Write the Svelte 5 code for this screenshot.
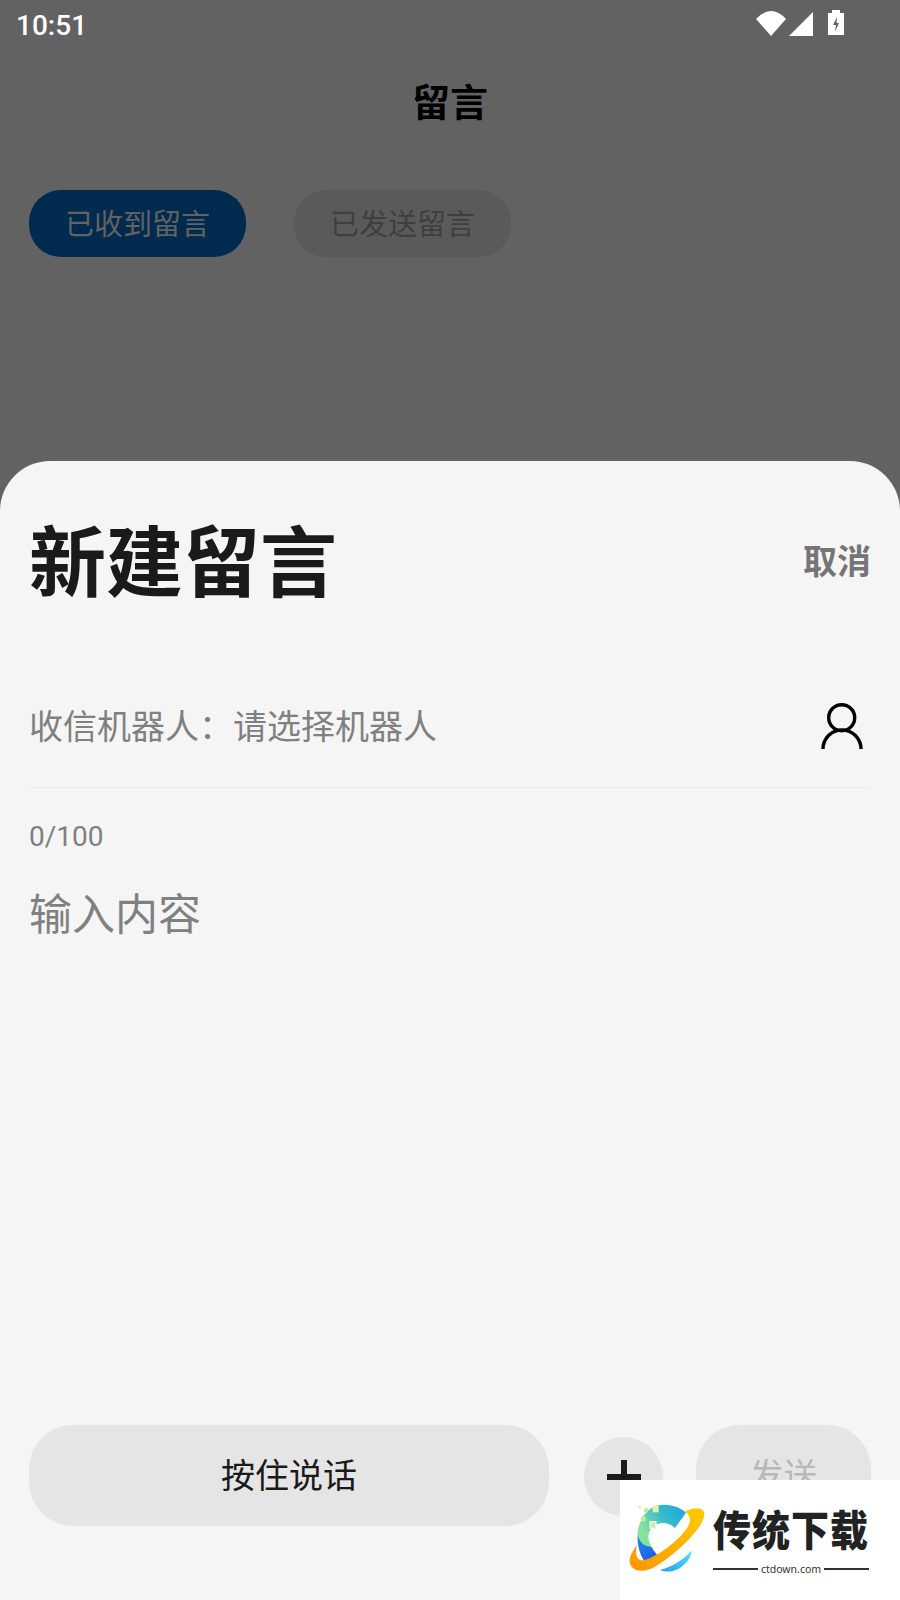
<script>
  let tabs = [
    { label: '已收到留言', active: true },
    { label: '已发送留言', active: false }
  ];
</script>

<div class="screen">
  <div class="page">
    <div class="status">
      <span class="time">10:51</span>
      <svg class="status-icons" width="90" height="28" viewBox="756 9 90 28">
        <path d="M771 36 L756 19 Q771 3 786 19 Z" fill="#fff" />
        <path d="M789 36 L813 12 V36 Z" fill="#fff" />
        <path d="M832 13 V10 H840 V13 H844 V35 H828 V13 Z" fill="#fff" />
        <path d="M837 17 L833 25 H836 L835 32 L839 23 H836.5 Z" fill="#626262" />
      </svg>
    </div>
    <h2 class="title">留言</h2>
    <div class="tabs">
      {#each tabs as tab}
        <div class="tab" class:active={tab.active}>{tab.label}</div>
      {/each}
    </div>
  </div>

  <div class="sheet">
    <div class="head">
      <h1>新建留言</h1>
      <span class="cancel">取消</span>
    </div>
    <div class="robot-row">
      <span class="robot-label">收信机器人：请选择机器人</span>
      <svg width="48" height="48" viewBox="818 701 48 48" fill="none" stroke="#000" stroke-width="3.4">
        <circle cx="841.7" cy="716.7" r="13" />
        <path d="M823 748 a19 19 0 0 1 38 0" />
      </svg>
    </div>
    <div class="counter">0/100</div>
    <div class="placeholder">输入内容</div>

    <div class="actions">
      <div class="talk">按住说话</div>
      <div class="plus"><span class="plus-mark"></span></div>
      <div class="send">发送</div>
    </div>
  </div>

  <div class="watermark">
    <svg class="logo" width="85" height="75" viewBox="0 0 255 225">
      <defs>
        <linearGradient id="ring" x1="0" y1="1" x2="1" y2="0">
          <stop offset="0" stop-color="#ff9500" />
          <stop offset="1" stop-color="#ffcc00" />
        </linearGradient>
        <linearGradient id="arc" x1="1" y1="0" x2="0" y2="0.8">
          <stop offset="0" stop-color="#18a5e6" />
          <stop offset="0.4" stop-color="#38bcc8" />
          <stop offset="0.75" stop-color="#86e2a0" />
          <stop offset="1" stop-color="#8be494" />
        </linearGradient>
        <linearGradient id="deep" x1="0" y1="0" x2="1" y2="1">
          <stop offset="0" stop-color="#1a8fe8" />
          <stop offset="1" stop-color="#2252ea" />
        </linearGradient>
        <linearGradient id="moon" x1="0" y1="1" x2="1" y2="0">
          <stop offset="0" stop-color="#2a9cf0" />
          <stop offset="1" stop-color="#45e6ff" />
        </linearGradient>
      </defs>
      <path d="M183 38 C160 18 125 10 95 17 C60 28 35 70 38 115 C40 145 50 170 60 185 L100 170 C80 145 65 120 72 98 C80 72 120 55 150 84 Z" fill="url(#arc)" />
      <path d="M38 105 C45 130 60 140 78 140 L100 170 C85 178 70 183 58 183 C45 165 36 135 38 105 Z" fill="url(#deep)" />
      <path d="M180 35 C205 20 240 20 238 45 C235 85 150 165 90 200 C55 220 18 215 14 185 C13 170 25 150 35 135 C30 165 35 185 60 180 C110 165 195 95 195 60 C195 50 190 40 180 35 Z" fill="url(#ring)" />
      <path d="M105 210 C140 200 175 180 200 152 C195 190 150 228 105 210 Z" fill="url(#moon)" />
      <rect x="40" y="17" width="9" height="9" fill="#e6f0a0" />
      <rect x="57" y="25" width="12" height="12" fill="#bfe8a0" />
      <rect x="83" y="17" width="18" height="20" fill="#e6f0a6" />
      <rect x="48" y="50" width="14" height="15" fill="#b8eaa0" />
      <rect x="75" y="65" width="18" height="20" fill="#c8eea0" stroke="#fff" stroke-width="3" />
    </svg>
    <div class="brand">
      <div class="brand-name">传统下载</div>
      <div class="brand-url"><i></i><span>ctdown.com</span><i></i></div>
    </div>
  </div>
</div>

<style>
  :global(body) {
    background: #626262;
  }

  .screen {
    position: relative;
    width: 900px;
    height: 1600px;
    overflow: hidden;
    background: #626262;
    font-family: Roboto, "Noto Sans CJK SC", sans-serif;
  }

  .status {
    display: flex;
    align-items: center;
    justify-content: space-between;
    height: 50px;
    padding: 0 54px 0 16px;
  }

  .time {
    font-size: 28px;
    font-weight: 500;
    color: #fff;
  }

  .status-icons {
    display: block;
    margin-bottom: 4px;
  }

  .title {
    margin: 27px 0 0;
    font-size: 38px;
    line-height: 52px;
    font-weight: 700;
    text-align: center;
    color: #000;
  }

  .tabs {
    display: flex;
    gap: 48px;
    margin-top: 61px;
    padding-left: 29px;
  }

  .tab {
    display: flex;
    align-items: center;
    justify-content: center;
    box-sizing: border-box;
    width: 217px;
    height: 67px;
    padding-bottom: 4px;
    border-radius: 32px;
    background: #5a5a5a;
    font-size: 29px;
    color: #3f3f3f;
  }

  .tab.active {
    background: #002b4f;
    color: #626262;
  }

  .sheet {
    position: absolute;
    top: 461px;
    left: 0;
    right: 0;
    bottom: 0;
    display: flex;
    flex-direction: column;
    padding: 54px 29px 74px;
    border-radius: 50px 50px 0 0;
    background: #f5f5f5;
  }

  .head {
    display: flex;
    align-items: center;
    justify-content: space-between;
    height: 100px;
  }

  h1 {
    margin: 0;
    font-size: 77px;
    line-height: 100px;
    font-weight: 700;
    color: #1a1a1a;
  }

  .cancel {
    margin-bottom: 12px;
    font-size: 34px;
    font-weight: 700;
    color: #757575;
  }

  .robot-row {
    display: flex;
    align-items: center;
    justify-content: space-between;
    height: 122px;
    margin-top: 50px;
    padding-right: 5px;
    border-bottom: 1px solid #ebebeb;
    font-size: 34px;
    color: #808080;
  }

  .robot-label {
    margin-bottom: 4px;
  }

  .robot-row svg {
    display: block;
  }

  .counter {
    margin-top: 29px;
    font-size: 28px;
    line-height: 40px;
    color: #808080;
  }

  .placeholder {
    margin-top: 28px;
    font-size: 43px;
    line-height: 60px;
    color: #808080;
  }

  .actions {
    display: flex;
    align-items: center;
    margin-top: auto;
  }

  .talk {
    display: flex;
    align-items: center;
    justify-content: center;
    box-sizing: border-box;
    width: 520px;
    height: 101px;
    padding-bottom: 4px;
    border-radius: 44px;
    background: #e5e5e5;
    font-size: 34px;
    color: #1a1a1a;
  }

  .plus {
    display: flex;
    align-items: center;
    justify-content: center;
    width: 79px;
    height: 79px;
    margin: 2px 0 0 35px;
    border-radius: 50%;
    background: #e5e5e5;
  }

  .plus-mark {
    position: relative;
    display: block;
    width: 34px;
    height: 34px;
  }

  .plus-mark::before,
  .plus-mark::after {
    content: "";
    position: absolute;
    background: #1a1a1a;
  }

  .plus-mark::before {
    left: 0;
    right: 0;
    top: 14px;
    height: 6px;
  }

  .plus-mark::after {
    top: 0;
    bottom: 0;
    left: 14px;
    width: 6px;
  }

  .send {
    display: flex;
    align-items: center;
    justify-content: center;
    box-sizing: border-box;
    width: 175px;
    height: 101px;
    margin-left: 33px;
    padding-bottom: 4px;
    border-radius: 44px;
    background: #e5e5e5;
    font-size: 34px;
    color: #b8b8b8;
  }

  /* site watermark stamped over the corner */
  .watermark {
    position: absolute;
    left: 620px;
    top: 1480px;
    width: 280px;
    height: 120px;
    display: flex;
    align-items: flex-start;
    background: #fff;
  }

  .logo {
    display: block;
    margin: 20px 0 0 5px;
  }

  .brand {
    width: 156px;
    margin: 28px 0 0 3px;
  }

  .brand-name {
    font-size: 38px;
    line-height: 46px;
    font-weight: 900;
    letter-spacing: 1px;
    white-space: nowrap;
    color: #222;
    transform: scaleY(1.12);
  }

  .brand-url {
    display: flex;
    align-items: center;
    gap: 3px;
    margin-top: 8px;
    font-family: "Noto Sans", sans-serif;
    font-size: 10.5px;
    line-height: 14px;
    color: #333;
  }

  .brand-url i {
    flex: 1;
    height: 2px;
    background: #333;
  }
</style>
